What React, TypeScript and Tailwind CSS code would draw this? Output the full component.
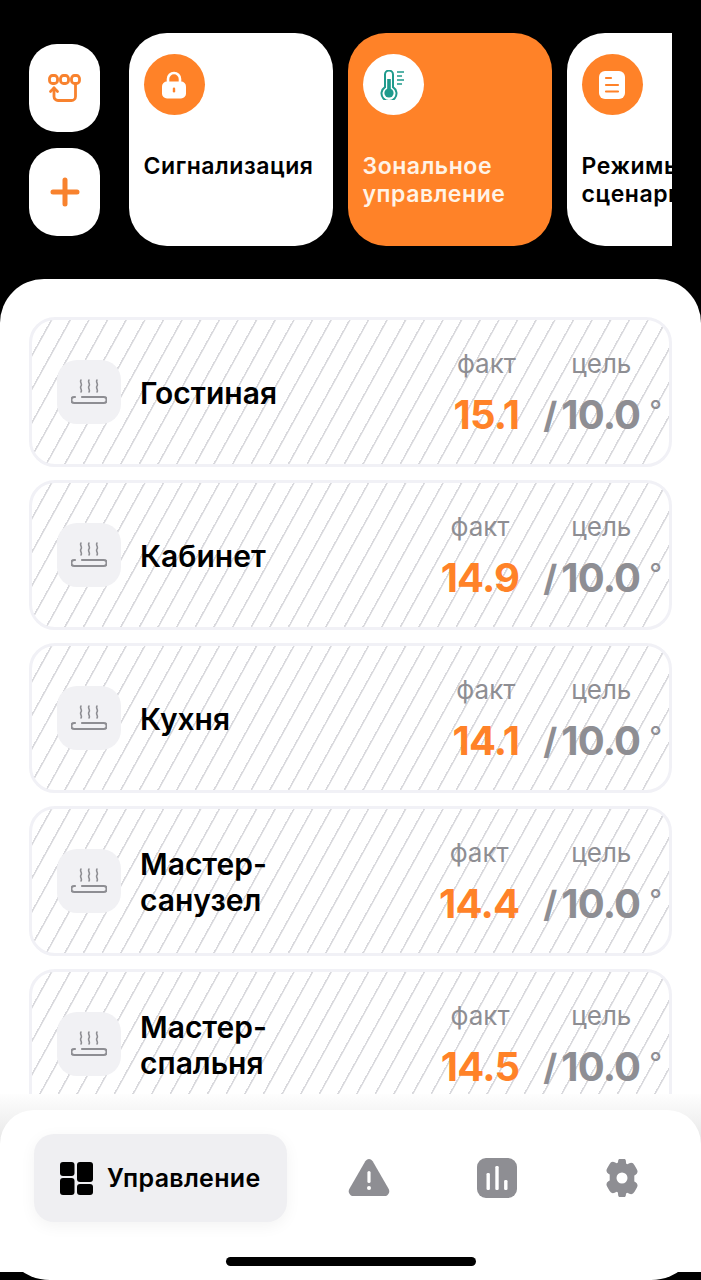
const zones = [
  { name: ['Гостиная'], fact: '15.1' },
  { name: ['Кабинет'], fact: '14.9' },
  { name: ['Кухня'], fact: '14.1' },
  { name: ['Мастер-', 'санузел'], fact: '14.4' },
  { name: ['Мастер-', 'спальня'], fact: '14.5' },
]

function RoutineIcon() {
  return (
    <svg width="33" height="28" viewBox="0 0 33 28" fill="none" stroke="#f8822e" strokeWidth="2.800" strokeLinecap="round" strokeLinejoin="round">
      <rect x="1.500" y="1.500" width="8" height="8" rx="3" />
      <rect x="12.500" y="1.500" width="8" height="8" rx="3" />
      <rect x="23.500" y="1.500" width="8" height="8" rx="3" />
      <path d="M27.500 10v12.500a4 4 0 0 1-4 4H10a4 4 0 0 1-4-4V14" />
      <path d="M2.500 17.500L6 14l3.500 3.500" />
    </svg>
  )
}

function PlusIcon() {
  return (
    <svg width="30" height="30" viewBox="0 0 30 30" fill="none" stroke="#f8822e" strokeWidth="5" strokeLinecap="round">
      <path d="M15 3v24M3 15h24" />
    </svg>
  )
}

function LockIcon() {
  return (
    <svg width="26" height="28" viewBox="0 0 26 28" fill="none">
      <path d="M7 12V8a6 6 0 0 1 12 0v4" stroke="#fff" strokeWidth="2.600" />
      <rect x="1" y="10.500" width="24" height="17" rx="5" fill="#fff" />
      <rect x="11.800" y="16.500" width="2.400" height="5" rx="1.200" fill="#ff8228" />
    </svg>
  )
}

function ThermoIcon() {
  return (
    <svg width="28" height="30" viewBox="0 0 28 30" fill="none">
      <path d="M6 4.500a4 4 0 0 1 8 0v12.600a7.500 7.500 0 1 1-8 0V4.500z" stroke="#1f9a8c" strokeWidth="2" />
      <circle cx="10" cy="23" r="4.600" fill="#1f9a8c" />
      <rect x="8.200" y="9" width="3.600" height="12" fill="#1f9a8c" />
      <path d="M18 2h7M18 6h5M18 10h7M18 14h5" stroke="#1f9a8c" strokeWidth="1.600" />
    </svg>
  )
}

function DocIcon() {
  return (
    <svg width="26" height="28" viewBox="0 0 26 28" fill="none">
      <rect x="0" y="0" width="26" height="28" rx="6" fill="#fff" />
      <path d="M7 7h5M7 14h12M7 20.500h12" stroke="#ff8228" strokeWidth="2.200" strokeLinecap="round" />
    </svg>
  )
}

function FloorHeatIcon() {
  return (
    <svg width="36" height="26" viewBox="0 0 36 26" fill="none" stroke="#8e8e93" strokeLinecap="round">
      <path d="M10 1c-1.600 2 1.600 4 0 6s1.600 4 0 6M18 1c-1.600 2 1.600 4 0 6s1.600 4 0 6M26 1c-1.600 2 1.600 4 0 6s1.600 4 0 6" strokeWidth="1.600" />
      <path d="M4 18h-.7a3 3 0 0 0 0 6h29.400a3 3 0 0 0 0-6H11" strokeWidth="2.200" />
    </svg>
  )
}

function GridIcon() {
  return (
    <svg width="33" height="33" viewBox="0 0 33 33" fill="#000">
      <rect x="0" y="0" width="14.500" height="14" rx="3" />
      <rect x="0" y="16" width="14.500" height="17" rx="3" />
      <rect x="17" y="0" width="16" height="20" rx="3" />
      <rect x="17" y="22" width="16" height="11" rx="3" />
    </svg>
  )
}

function WarningIcon() {
  return (
    <svg width="42" height="38" viewBox="0 0 42 38">
      <path d="M17.300 2.200a4.300 4.300 0 0 1 7.400 0l16 27.800c1.600 3-.5 7-4 7H5.300c-3.500 0-5.600-4-4-7z" fill="#8e8e93" />
      <rect x="19.400" y="12" width="3.200" height="12" rx="1.600" fill="#fff" />
      <circle cx="21" cy="29" r="2" fill="#fff" />
    </svg>
  )
}

function ChartIcon() {
  return (
    <svg width="40" height="40" viewBox="0 0 40 40">
      <rect width="40" height="40" rx="9" fill="#8e8e93" />
      <rect x="9.500" y="15" width="3.400" height="17" rx="1.300" fill="#fff" />
      <rect x="18.300" y="8" width="3.400" height="24" rx="1.300" fill="#fff" />
      <rect x="27.100" y="22" width="3.400" height="10" rx="1.300" fill="#fff" />
    </svg>
  )
}

function GearIcon() {
  return (
    <svg width="38" height="38" viewBox="0 0 38 38">
      <path
        fillRule="evenodd"
        fill="#8e8e93"
        d="M15 3a4 4 0 0 1 8 0v1.500l1.500.8 1.300-.7a4.200 4.200 0 0 1 5.700 1.600l2.300 4a4.200 4.200 0 0 1-1.500 5.700l-1 .6v6l1 .6a4.200 4.200 0 0 1 1.500 5.700l-2.300 4a4.200 4.200 0 0 1-5.700 1.600l-1.300-.7-1.500.8V35a4 4 0 0 1-8 0v-1.500l-1.500-.8-1.300.7a4.200 4.200 0 0 1-5.700-1.600l-2.300-4a4.200 4.200 0 0 1 1.500-5.700l1-.6v-6l-1-.6a4.200 4.200 0 0 1-1.500-5.700l2.300-4a4.200 4.200 0 0 1 5.700-1.600l1.300.7 1.500-.8V3zM19 13.500a5.500 5.500 0 1 0 0 11 5.500 5.500 0 0 0 0-11z"
      />
    </svg>
  )
}

function QuickCard({ icon, title, active }: { icon: React.ReactNode; title: string[]; active?: boolean }) {
  return (
    <div className={`w-[204px] h-[213px] shrink-0 rounded-[38px] px-[14.5px] pt-[21px] ${active ? 'bg-[#ff8228] text-[#fff3e6]' : 'bg-white text-black'}`}>
      <div className={`w-[61px] h-[61px] rounded-full flex items-center justify-center ${active ? 'bg-white' : 'bg-[#ff8228]'}`}>{icon}</div>
      <div className="mt-[37px] text-[23px] leading-[28px] font-semibold tracking-[0.55px] whitespace-nowrap">
        {title.map((line) => (
          <div key={line}>{line}</div>
        ))}
      </div>
    </div>
  )
}

function ZoneRow({ name, fact }: { name: string[]; fact: string }) {
  return (
    <div className="h-[150px] shrink-0 rounded-[26px] border-[3px] border-[#f1f1f6] flex items-center pl-[25px] pr-[7px] bg-[repeating-linear-gradient(119deg,#d9d9dd_0px,#d9d9dd_1.2px,#ffffff_2px,#ffffff_16.3px)]">
      <div className="w-[64px] h-[64px] rounded-[20px] bg-[#f1f1f4] flex items-center justify-center shrink-0">
        <FloorHeatIcon />
      </div>
      <div className="ml-[19px] pt-[1px] text-[30px] leading-[36px] font-semibold text-black">
        {name.map((line) => (
          <div key={line}>{line}</div>
        ))}
      </div>
      <div className="ml-auto flex items-start pt-[1px]">
        <div className="flex flex-col items-center">
          <div className="text-[26px] leading-[30px] text-[#8e8e93]">факт</div>
          <div className="mt-[14px] text-[40px] leading-[44px] font-bold tracking-[-0.8px] text-[#ff8228]">{fact}</div>
        </div>
        <div className="ml-[24px] flex flex-col">
          <div className="text-[26px] leading-[30px] text-[#8e8e93] pl-[28px]">цель</div>
          <div className="mt-[14px] flex items-start text-[#8e8e93] font-bold">
            <span className="text-[36px] leading-[44px] mr-[4px]">/</span>
            <span className="text-[40px] leading-[44px] tracking-[-0.8px]">10.0</span>
            <span className="ml-[9px] text-[28px] leading-[36px] font-normal">°</span>
          </div>
        </div>
      </div>
    </div>
  )
}

export default function App() {
  return (
    <div className="relative w-[701px] h-[1280px] bg-black overflow-hidden font-['Inter','Liberation_Sans',sans-serif]">
      <div className="pt-[33px] pl-[29px] w-[672px] flex gap-[29px] overflow-hidden">
        <div className="flex flex-col gap-[16px] pt-[11px] shrink-0">
          <div className="w-[71px] h-[88px] rounded-[28px] bg-white flex items-center justify-center">
            <RoutineIcon />
          </div>
          <div className="w-[71px] h-[88px] rounded-[28px] bg-white flex items-center justify-center">
            <PlusIcon />
          </div>
        </div>
        <div className="flex gap-[15px]">
          <QuickCard icon={<LockIcon />} title={['Сигнализация']} />
          <QuickCard icon={<ThermoIcon />} title={['Зональное', 'управление']} active />
          <QuickCard icon={<DocIcon />} title={['Режимы и', 'сценарии']} />
        </div>
      </div>

      <div className="mt-[33px] h-[993px] rounded-t-[44px] bg-white px-[29px] pt-[38px] flex flex-col gap-[13px] overflow-hidden">
        {zones.map((zone) => (
          <ZoneRow key={zone.fact} name={zone.name} fact={zone.fact} />
        ))}
      </div>

      {/* fade over the list, behind the nav's top corners */}
      <div className="absolute left-0 top-[1094px] w-[701px] h-[50px] bg-gradient-to-b from-[#fefefe] to-[#e6e6e6]" />

      <div className="absolute left-0 bottom-0 w-[701px] h-[170px] rounded-t-[34px] rounded-b-[50px] bg-white pl-[34px] pt-[24px]">
        <div className="flex items-start">
          <div className="w-[253px] h-[88px] rounded-[20px] bg-[#efeff2] shadow-[0_4px_16px_rgba(0,0,0,0.05)] flex items-center pl-[26px] gap-[14px] shrink-0">
            <GridIcon />
            <span className="pt-[2px] text-[25px] tracking-[0.3px] font-semibold text-black">Управление</span>
          </div>
          <div className="ml-[61px] mt-[25px] shrink-0"><WarningIcon /></div>
          <div className="ml-[87px] mt-[24px] shrink-0"><ChartIcon /></div>
          <div className="ml-[86px] mt-[25px] shrink-0"><GearIcon /></div>
        </div>
        <div className="absolute left-[226px] top-[147px] w-[250px] h-[9px] rounded-full bg-black" />
      </div>
    </div>
  )
}
